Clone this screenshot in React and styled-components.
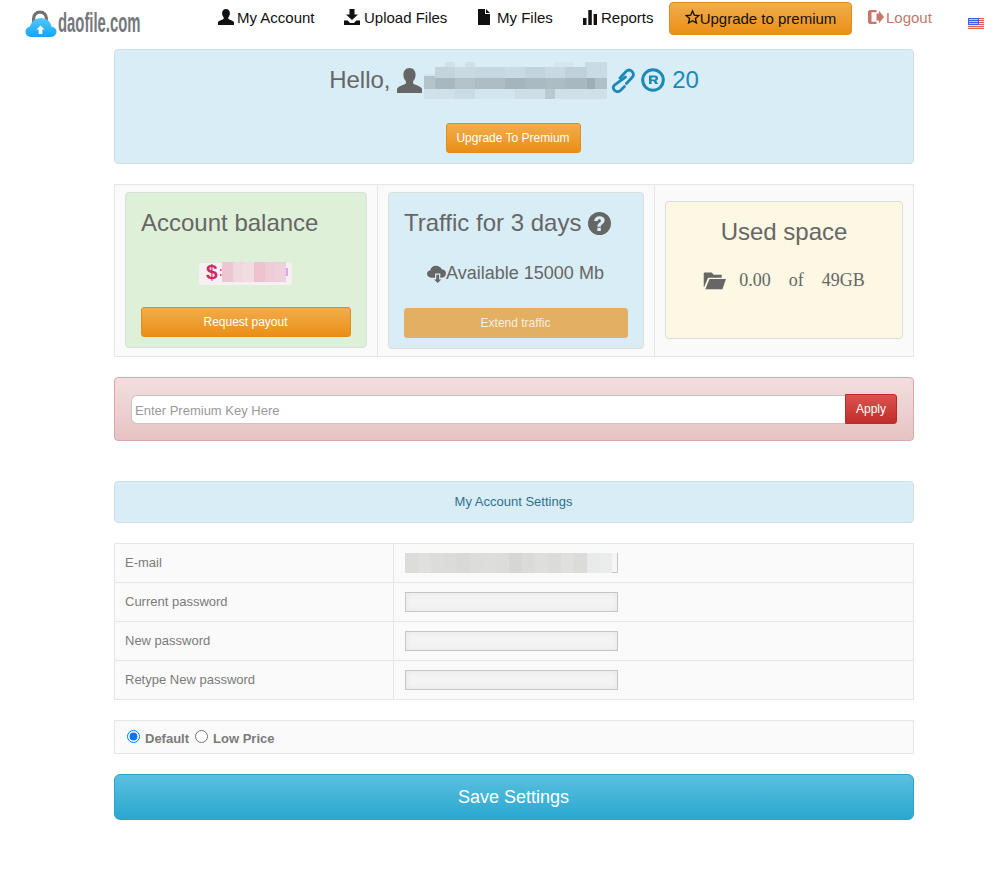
import React from 'react';
import styled, { createGlobalStyle } from 'styled-components';

const Global = createGlobalStyle`
  html, body { margin: 0; padding: 0; background: #fff; overflow: hidden; }
  body { font-family: "Liberation Sans", Arial, sans-serif; color: #666; }
  * { box-sizing: border-box; }
`;

const Page = styled.div`
  width: 1002px;
  height: 885px;
  overflow: hidden;
`;

const TopBar = styled.header`
  display: flex;
  height: 49px;
  padding-top: 2px;
`;

const Logo = styled.a`
  display: flex;
  align-items: flex-start;
  width: 218px;
  padding: 8px 0 0 25px;
  gap: 1px;
`;

const LogoText = styled.span`
  font-family: "Liberation Sans Narrow", "Liberation Sans", sans-serif;
  font-size: 27px;
  font-weight: 700;
  line-height: 27px;
  color: #74787c;
  display: inline-block;
  transform: scaleX(0.55);
  transform-origin: left center;
`;

const NavItem = styled.a`
  display: flex;
  align-items: center;
  gap: ${p => p.$gap}px;
  width: ${p => p.$w}px;
  height: 30px;
  font-size: 15px;
  color: ${p => p.$muted ? '#c4776a' : '#111'};
`;

const NavButton = styled.a`
  display: flex;
  align-items: center;
  justify-content: center;
  width: 183px;
  height: 33px;
  margin: 0 16px 0 0;
  font-size: 15px;
  color: #111;
  border: 1px solid #e08e1e;
  border-radius: 4px;
  background: linear-gradient(#f0ad4e, #eb8f16);
`;

const Flag = styled.span`
  display: block;
  margin-top: 16px;
  line-height: 0;
`;

const Content = styled.main`
  width: 800px;
  margin-left: 114px;
  display: flex;
  flex-direction: column;
`;

const Well = styled.div`
  border: 1px solid ${p => p.$border || '#d2dfe6'};
  border-radius: 4px;
  background: ${p => p.$bg || '#d9edf7'};
`;

const HelloWell = styled(Well)`
  height: 115px;
  display: flex;
  flex-direction: column;
  align-items: center;
  padding: 12px 1px 0 0;
`;

const HelloRow = styled.div`
  display: flex;
  align-items: center;
  height: 36px;
  margin-left: 1px;
  font-size: 24px;
  color: #666;
`;

const NameMask = styled.span`
  display: block;
  line-height: 0;
  margin-left: 2px;
`;

const Referrals = styled.span`
  color: #1b8ab8;
  margin-left: 7px;
`;

const OrangeButton = styled.a`
  display: flex;
  align-items: center;
  justify-content: center;
  padding-right: 1px;
  color: ${p => p.$disabled ? 'rgba(255, 255, 255, 0.8)' : '#fff'};
  font-size: 12px;
  border: 1px solid ${p => p.$disabled ? '#e3af62' : '#e08e1e'};
  border-radius: 3px;
  background: ${p => p.$disabled ? '#e3af62' : 'linear-gradient(#f0ad4e, #eb8f16)'};
`;

const UpgradeSmall = styled(OrangeButton)`
  width: 135px;
  height: 30px;
  margin-top: 25px;
`;

const Stats = styled.div`
  display: flex;
  height: 173px;
  margin-top: 20px;
  border: 1px solid #e6e6e6;
  background: #fafafa;
`;

const StatCell = styled.div`
  width: ${p => p.$w}px;
  padding: ${p => p.$pad};
  border-left: ${p => p.$first ? 'none' : '1px solid #e6e6e6'};
  flex: none;
`;

const StatCard = styled(Well)`
  height: ${p => p.$h}px;
  padding: ${p => p.$pad};
  border-color: #dadfda;
  display: flex;
  flex-direction: column;
`;

const StatTitle = styled.h3`
  margin: 0;
  font-size: 24px;
  font-weight: 400;
  line-height: 30px;
  color: #666;
  display: flex;
  align-items: center;
  gap: 7px;
  justify-content: ${p => p.$center ? 'center' : 'flex-start'};
`;

const BalanceRow = styled.div`
  display: flex;
  justify-content: center;
  margin-top: 21px;
  padding-right: 2px;
`;

const TrafficRow = styled.div`
  display: flex;
  align-items: center;
  justify-content: center;
  font-size: 18px;
  color: #666;
  height: 24px;
  margin-top: 23px;
  padding-right: 1px;
`;

const PayoutButton = styled(OrangeButton)`
  height: 30px;
  margin-top: auto;
  margin-bottom: 10px;
`;

const SpaceRow = styled.div`
  display: flex;
  align-items: center;
  justify-content: center;
  font-family: "Liberation Serif", serif;
  font-size: 18px;
  color: #666;
  margin-top: 21px;
  height: 24px;
`;

const SpaceText = styled.span`
  white-space: pre;
  margin-left: 13px;
`;

const KeyWell = styled(Well)`
  height: 64px;
  margin-top: 20px;
  display: flex;
  align-items: center;
  padding: 0 16px;
  background: linear-gradient(#f2dede, #e7c3c3);
`;

const KeyInput = styled.input`
  flex: 1;
  height: 29px;
  margin-top: 1px;
  padding: 1px 3px 0;
  font: 13px "Liberation Sans", sans-serif;
  border: 1px solid #c9c5c5;
  border-right: none;
  border-radius: 6px 0 0 6px;
  background: #fff;
  outline: none;
  &::placeholder { color: #999; opacity: 1; }
`;

const ApplyButton = styled.a`
  display: flex;
  align-items: center;
  justify-content: center;
  width: 52px;
  height: 30px;
  font-size: 12px;
  color: #fff;
  border: 1px solid #b92c28;
  border-radius: 0 3px 3px 0;
  background: linear-gradient(#d9534f, #c12e2a);
`;

const SettingsTitle = styled(Well)`
  height: 42px;
  margin-top: 40px;
  padding: 0 1px 1px 0;
  display: flex;
  align-items: center;
  justify-content: center;
  font-size: 13px;
  color: #31708f;
  border-color: #d4dfe5;
`;

const Settings = styled.div`
  margin-top: 20px;
  border: 1px solid #e6e6e6;
  background: #fafafa;
`;

const Row = styled.div`
  display: grid;
  grid-template-columns: 279px 1fr;
  height: 38px;
  & + & {
    height: 39px;
    border-top: 1px solid #e6e6e6;
  }
`;

const RowLabel = styled.label`
  display: flex;
  align-items: center;
  padding: 0 0 1px 10px;
  font-size: 13px;
  color: #7b7b7b;
  border-right: 1px solid #e6e6e6;
`;

const RowField = styled.div`
  display: flex;
  align-items: center;
  padding-left: 11px;
`;

const BlurInput = styled.div`
  width: 213px;
  height: 20px;
  border: 1px solid #c6c6c6;
  background: #f4f4f4;
  box-shadow: inset 0 0 6px #e6e6e6;
`;

const EmailBlock = styled.div`
  width: 213px;
  height: 20px;
  line-height: 0;
  border-right: 1px solid #c6c6c6;
  background: linear-gradient(to top, #c6c6c6 1px, #f6f6f6 1px);
`;

const PlanBar = styled.div`
  display: flex;
  align-items: center;
  height: 34px;
  margin-top: 20px;
  padding: 2px 0 0 12px;
  border: 1px solid #e6e6e6;
  background: #fafafa;
  font-size: 13px;
  font-weight: 700;
  color: #7b7b7b;
`;

const Radio = styled.input`
  width: 13px;
  height: 13px;
  margin: 0 5px 4px 0;
`;

const PlanLabel = styled.span`
  margin-right: 6px;
`;

const SaveButton = styled.a`
  display: flex;
  align-items: center;
  justify-content: center;
  height: 46px;
  margin-top: 20px;
  padding: 1px 1px 0 0;
  font-size: 18px;
  color: #fff;
  border: 1px solid #28a4c9;
  border-radius: 6px;
  background: linear-gradient(#5bc0de, #2aa7d0);
`;

// pixelated redaction over the user name: [x, y, w, h, colour]
const nameCells = [
  [21, 0, 10, 5, '#cfe0e9'], [41, 0, 10, 5, '#cfe0e9'], [130, 0, 20, 5, '#d4e6ef'], [161, 0, 22, 5, '#c9dbe4'],
  [161, 5, 22, 11, '#c9dbe4'], [0, 12, 11, 4, '#d3e4ed'],
  [11, 5, 20, 11, '#c3d4dc'], [31, 5, 20, 11, '#c9dae2'], [51, 5, 30, 11, '#c6d7df'], [81, 5, 20, 11, '#c9dae2'],
  [101, 5, 20, 11, '#c2d3db'], [121, 5, 20, 11, '#c8d9e1'], [141, 5, 22, 11, '#c0d1d9'],
  [0, 14, 11, 13, '#b5c4cb'], [11, 16, 20, 11, '#a9b8bf'], [31, 16, 20, 11, '#b4c3ca'], [51, 16, 30, 11, '#aebcc3'],
  [81, 16, 20, 11, '#a6b4bb'], [101, 16, 20, 11, '#abb9c0'], [121, 16, 20, 11, '#aebcc3'], [141, 16, 22, 11, '#a9b8bf'],
  [163, 16, 8, 11, '#9fadb4'], [171, 16, 12, 11, '#b0c0c7'],
  [0, 27, 31, 10, '#d0e1ea'], [31, 27, 20, 10, '#c9dbe4'], [51, 27, 40, 10, '#d3e5ee'], [91, 27, 30, 10, '#cddee7'],
  [121, 27, 10, 10, '#b9cad1'], [131, 27, 52, 10, '#cfe0e9'],
];

const emailColours = ['#dcdcdb', '#dfdfde', '#dcdcdb', '#dbdbda', '#d9d9d8', '#dcdcdb', '#dddddc', '#dcdcdb', '#d6d6d5', '#dbdbda', '#dededd', '#dbdbda', '#dfdfde', '#dbdbda', '#e9eaea', '#ebecec'];

const Mosaic = ({ w, h, cells }) => (
  <svg width={w} height={h} viewBox={`0 0 ${w} ${h}`} shapeRendering="crispEdges">
    {cells.map(([x, y, cw, ch, c], i) => <rect key={i} x={x} y={y} width={cw} height={ch} fill={c} />)}
  </svg>
);

const icons = {
  user: 'M8 0c2.4 0 3.9 1.8 3.9 4.3 0 1.7-.7 3.2-1.6 4.1v1.4c0 .7 4.7 1.5 5.7 3.5V16H0v-2.7c1-2 5.7-2.8 5.7-3.5V8.4C4.8 7.5 4.1 6 4.1 4.3 4.1 1.8 5.600 0 8 0z',
  download: 'M5.500 0h5v5.500H14L8 11 2 5.500h3.500zM0 11.500h3.700L6 14h4l2.300-2.500H16V16H0z',
  file: 'M0 0h7v5h5v11H0zM8 0l4 4H8z',
  chart: 'M0 9h3.500v7H0zM5.300 1h3.500v15H5.300zM10.600 5H14v11h-3.400z',
  logout: 'M1.500 1h7v2.300H3.500v9.400h5V15h-7L0 13.500v-11zM8.500 4.500H11V1.800L16 8l-5 6.200v-2.700H8.500z',
  question: 'M8 0a8 8 0 1 1 0 16A8 8 0 0 1 8 0zM8 3C5.800 3 4.500 4.200 4.300 6.200h2.400c.1-.8.5-1.200 1.200-1.200.7 0 1.100.4 1.100 1 0 1.300-2.500 1.600-2.500 4.200h2.400c0-1.700 2.700-2 2.700-4.400C11.600 4 10.100 3 8 3zM6.500 11h2.400v2.200H6.500z',
  cloudDown: 'M12.500 4.500C14.600 4.600 16 6.200 16 8s-1.500 3.500-3.500 3.500h-1.300V8H6.800v3.500H3.500C1.500 11.500 0 10.200 0 8.300 0 6.600 1.100 5.400 2.800 5.200 3.300 2.900 5.200 1.500 7.300 1.500c2.300 0 4.300 1.100 5.200 3zM7.800 9h2.400v4H12l-3 3-3-3h1.800z',
  folder: 'M1 2.500h5L7.500 4H13v2H3.500L.8 12.500H.5V3zM4.500 7H16l-2.500 7H1.600z',
};

const Glyph = ({ name, size = 16, color = 'currentColor' }) => (
  <svg width={size} height={size} viewBox="0 0 16 16" style={{ flex: 'none' }}>
    <path d={icons[name]} fill={color} fillRule="evenodd" />
  </svg>
);

const LogoMark = () => (
  <svg width="32" height="29" viewBox="0 0 32 29" style={{ flex: 'none' }}>
    <defs>
      <linearGradient id="cl" x1="0" x2="0" y1="0" y2="1">
        <stop offset="0" stopColor="#52c8fb" />
        <stop offset="1" stopColor="#12a6f8" />
      </linearGradient>
    </defs>
    <path d="M8.600 14V8.500a6.400 6.400 0 0 1 12.800 0V14" fill="none" stroke="#6f7175" strokeWidth="3.200" />
    <path d="M6 27C2.500 27 .5 24.500 .5 21.800.5 19 2.300 17 5 16.500 6.500 11.500 10.500 8 16 8s9.500 3.500 10.500 8.500c3 .5 5 2.500 5 5.300 0 2.700-2.500 5.200-5.500 5.200z" fill="url(#cl)" />
    <path d="M15.500 15.500l4 4h-2.200V24h-3.600v-4.500h-2.200z" fill="#fff" />
  </svg>
);

const LinkIcon = () => (
  <svg width="24" height="26" viewBox="0 0 24 26" fill="none" stroke="#1b8ab8" strokeWidth="2.800" strokeLinecap="round" style={{ marginLeft: 4, flex: 'none' }}>
    <path d="M9 11 15 4.500Q18 1.500 21 4.500 24 7.500 21 10.500L15.500 16.500" />
    <path d="M14.500 10 3.500 18Q1 20.500 3.500 23.300 6.500 26 9.500 23.500L13.500 19.500" />
  </svg>
);

const RefIcon = () => (
  <svg width="24" height="24" viewBox="0 0 24 24" style={{ marginLeft: 6, flex: 'none' }}>
    <circle cx="12" cy="12" r="10.300" fill="none" stroke="#1b8ab8" strokeWidth="3" />
    <path d="M8 7.500h6c2 0 3 1 3 2.700 0 1.300-.7 2.200-1.800 2.500l2 3.300h-3l-1.700-3H10.600v3H8zM10.600 9.500v1.900h3.100c.6 0 .9-.4.900-1s-.3-.9-.9-.9z" fill="#1b8ab8" fillRule="evenodd" />
  </svg>
);

const StarIcon = () => (
  <svg width="15" height="16" viewBox="0 0 16 16" style={{ flex: 'none', marginTop: -3 }}>
    <path d="M8 1.500l1.900 4.500 4.900.4-3.700 3.200 1.100 4.800L8 11.900l-4.200 2.500 1.100-4.800L1.200 6.400 6.100 6z" fill="none" stroke="#111" strokeWidth="1.400" />
  </svg>
);

const FlagIcon = () => (
  <svg width="16" height="11" viewBox="0 0 16 11" shapeRendering="crispEdges">
    <rect width="16" height="11" fill="#f7dede" />
    {[0, 2, 4, 6, 8, 10].map(y => <rect key={y} y={y} width="16" height="1" fill="#e85a5a" />)}
    <rect width="11" height="7" fill="#3f62e2" />
    <rect x="1" y="1" width="9" height="1" fill="#b9c6f5" />
    <rect x="1" y="3" width="9" height="1" fill="#b9c6f5" />
    <rect x="1" y="5" width="9" height="1" fill="#b9c6f5" />
  </svg>
);

const BalanceMask = () => (
  <svg width="93" height="26" viewBox="0 0 93 26">
    <rect x="0" y="4" width="93" height="22" rx="3" fill="#f6eff4" />
    <text x="7" y="19.500" fontFamily="Liberation Sans" fontWeight="700" fontSize="21" fill="#cf2a5f">$</text>
    <rect x="21" y="10" width="1.500" height="2" fill="#e0507a" />
    <rect x="21" y="15" width="1.500" height="2" fill="#e0507a" />
    <g shapeRendering="crispEdges">
      <rect x="23" y="3" width="11" height="20" fill="#ecc6d0" />
      <rect x="34" y="3" width="10" height="20" fill="#f0d6de" />
      <rect x="44" y="3" width="11" height="20" fill="#f3dbe2" />
      <rect x="55" y="3" width="11" height="20" fill="#ecc3cf" />
      <rect x="66" y="3" width="10" height="20" fill="#efccd6" />
      <rect x="76" y="3" width="11" height="20" fill="#efcfd9" />
      <rect x="87" y="9" width="2" height="8" fill="#d9a8e8" />
    </g>
  </svg>
);

const navItems = [
  { icon: 'user', label: 'My Account', w: 126, gap: 3 },
  { icon: 'download', label: 'Upload Files', w: 134, gap: 4 },
  { icon: 'file', label: 'My Files', w: 105, gap: 3 },
  { icon: 'chart', label: 'Reports', w: 86, gap: 2 },
];

const fields = ['E-mail', 'Current password', 'New password', 'Retype New password'];

function App() {
  return (
    <Page>
      <Global />
      <TopBar>
        <Logo>
          <LogoMark />
          <LogoText>daofile.com</LogoText>
        </Logo>
        {navItems.map(n => (
          <NavItem key={n.label} $w={n.w} $gap={n.gap}>
            <Glyph name={n.icon} size={16} color="#111" />
            {n.label}
          </NavItem>
        ))}
        <NavButton><StarIcon />Upgrade to premium</NavButton>
        <NavItem $w={100} $gap={2} $muted>
          <Glyph name="logout" size={16} color="#c4776a" />
          Logout
        </NavItem>
        <Flag><FlagIcon /></Flag>
      </TopBar>
      <Content>
        <HelloWell>
          <HelloRow>
            Hello,&nbsp;
            <Glyph name="user" size={25} color="#666" />
            <NameMask><Mosaic w={183} h={37} cells={nameCells} /></NameMask>
            <LinkIcon />
            <RefIcon />
            <Referrals>20</Referrals>
          </HelloRow>
          <UpgradeSmall>Upgrade To Premium</UpgradeSmall>
        </HelloWell>

        <Stats>
          <StatCell $first $w={262} $pad="7px 10px">
            <StatCard $h={156} $bg="#dff0d8" $pad="15px 15px 0">
              <StatTitle>Account balance</StatTitle>
              <BalanceRow><BalanceMask /></BalanceRow>
              <PayoutButton>Request payout</PayoutButton>
            </StatCard>
          </StatCell>
          <StatCell $w={277} $pad="7px 10px">
            <StatCard $h={157} $bg="#d9edf7" $pad="15px 15px 0">
              <StatTitle>Traffic for 3 days <Glyph name="question" size={23} color="#666" /></StatTitle>
              <TrafficRow><Glyph name="cloudDown" size={19} color="#666" />Available 15000 Mb</TrafficRow>
              <PayoutButton $disabled>Extend traffic</PayoutButton>
            </StatCard>
          </StatCell>
          <StatCell $w={259} $pad="16px 10px">
            <StatCard $h={138} $bg="#fcf8e3" $pad="15px 15px 0">
              <StatTitle $center>Used space</StatTitle>
              <SpaceRow>
                <Glyph name="folder" size={23} color="#666" />
                <SpaceText>0.00    of    49GB</SpaceText>
              </SpaceRow>
            </StatCard>
          </StatCell>
        </Stats>

        <KeyWell $border="#dca7a7">
          <KeyInput placeholder="Enter Premium Key Here" />
          <ApplyButton>Apply</ApplyButton>
        </KeyWell>

        <SettingsTitle>My Account Settings</SettingsTitle>

        <Settings>
          {fields.map((label, i) => (
            <Row key={label}>
              <RowLabel>{label}</RowLabel>
              <RowField>
                {i === 0 ? (
                  <EmailBlock>
                    <Mosaic w={207} h={20} cells={emailColours.map((c, n) => [n * 13, 0, 13, 20, c])} />
                  </EmailBlock>
                ) : <BlurInput />}
              </RowField>
            </Row>
          ))}
        </Settings>

        <PlanBar>
          <Radio type="radio" name="plan" defaultChecked />
          <PlanLabel>Default</PlanLabel>
          <Radio type="radio" name="plan" />
          <PlanLabel>Low Price</PlanLabel>
        </PlanBar>

        <SaveButton>Save Settings</SaveButton>
      </Content>
    </Page>
  );
}

export default App;
